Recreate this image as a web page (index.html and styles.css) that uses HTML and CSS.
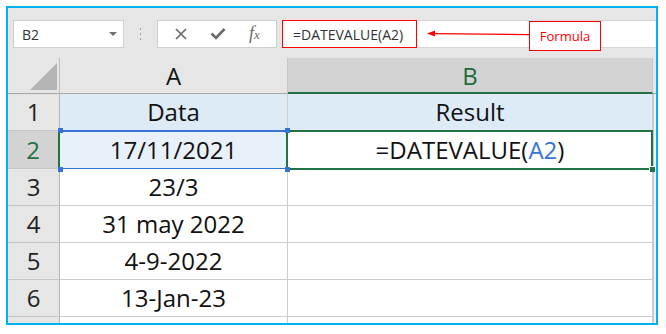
FILE: index.html
```html
<!DOCTYPE html>
<html>
<head>
<meta charset="utf-8">
<link rel="stylesheet" href="styles.css">
</head>
<body>
<div class="frame">
  <div class="toolbar">
    <div class="namebox"><span class="nb-text">B2</span><span class="caret"></span></div>
    <div class="sep"><i></i><i></i><i></i></div>
    <div class="buttons">
      <svg class="ic" width="14" height="14" viewBox="0 0 14 14"><path d="M2 2 L12 12 M12 2 L2 12" stroke="#6b6b6b" stroke-width="1.7" fill="none"/></svg>
      <svg class="ic" width="16" height="14" viewBox="0 0 16 14"><path d="M1.5 6.5 L6 11 L14.5 2" stroke="#6b6b6b" stroke-width="2.6" fill="none"/></svg>
      <span class="fx"><span class="fx-f">f</span><span class="fx-x">x</span></span>
    </div>
    <div class="formula"><span class="ftext">=DATEVALUE(A2)</span></div>
    <svg class="arrow" width="648" height="50" viewBox="0 0 648 50"><path d="M426 25.6 L521 26.6" stroke="#ff0000" stroke-width="1.2" fill="none"/><path d="M419 25.5 L427 22.5 L427 28.5 Z" fill="#ff0000"/></svg>
    <div class="label">Formula</div>
  </div>
  <div class="grid">
    <div class="corner"><span class="tri"></span></div>
    <div class="ch">A</div>
    <div class="ch ch-sel">B</div>
    <div class="fill-h"></div>

    <div class="rh">1</div>
    <div class="c blue">Data</div>
    <div class="c blue">Result</div>
    <div class="fill"></div>

    <div class="rh rh-sel">2</div>
    <div class="c ref">17/11/2021<span class="hd tl"></span><span class="hd tr"></span><span class="hd bl"></span><span class="hd br"></span></div>
    <div class="c active">=DATEVALUE(<span class="refc">A2</span>)<span class="handle"></span></div>
    <div class="fill"></div>

    <div class="rh">3</div>
    <div class="c">23/3</div>
    <div class="c"></div>
    <div class="fill"></div>

    <div class="rh">4</div>
    <div class="c">31 may 2022</div>
    <div class="c"></div>
    <div class="fill"></div>

    <div class="rh">5</div>
    <div class="c">4-9-2022</div>
    <div class="c"></div>
    <div class="fill"></div>

    <div class="rh">6</div>
    <div class="c">13-Jan-23</div>
    <div class="c"></div>
    <div class="fill"></div>

    <div class="rh last"></div>
    <div class="c last"></div>
    <div class="c last"></div>
    <div class="fill"></div>
  </div>
</div>
</body>
</html>
```
FILE: styles.css
```css
* { box-sizing: border-box; }
html, body { margin: 0; padding: 0; background: #ffffff; }
body { font-family: "Open Sans", "Liberation Sans", sans-serif; }

.frame {
  margin: 6px 0 0 6px;
  width: 652px;
  height: 319px;
  border: 2px solid #00b0f0;
  background: #e6e6e6;
  display: flex;
  flex-direction: column;
}

.toolbar {
  position: relative;
  display: flex;
  align-items: stretch;
  height: 50px;
  padding: 12px 0 10px 5px;
}

.namebox {
  width: 111px;
  height: 28px;
  background: #fff;
  border: 1px solid #cfcfcf;
  display: flex;
  align-items: center;
  justify-content: space-between;
  padding: 0 6px 0 8px;
}
.nb-text { font-size: 14px; color: #333; }
.caret {
  width: 0; height: 0;
  border-left: 4px solid transparent;
  border-right: 4px solid transparent;
  border-top: 4px solid #707070;
}

.sep {
  width: 33px;
  display: flex;
  flex-direction: column;
  align-items: center;
  justify-content: center;
  gap: 3px;
}
.sep i { display: block; width: 1px; height: 2px; background: #a6a6a6; }

.buttons {
  width: 120px;
  height: 28px;
  background: #fff;
  border: 1px solid #cfcfcf;
  display: flex;
  align-items: center;
  padding: 0 0 0 16px;
  gap: 22px;
}
.fx {
  font-family: "Liberation Serif", serif;
  font-style: italic;
  color: #6b6b6b;
  font-size: 18px;
  line-height: 1;
  margin-left: 1px;
  margin-top: -2px;
}
.fx-x { font-size: 13px; }

.formula {
  flex: 1;
  margin-left: 5px;
  height: 28px;
  background: #fff;
  border-top: 1px solid #d6d6d6;
  border-bottom: 1px solid #d6d6d6;
  display: flex;
}
.ftext {
  width: 135px;
  height: 28px;
  margin-top: -1px;
  border: 1px solid #ff0000;
  font-size: 14px;
  color: #333;
  padding-left: 10px;
  display: flex;
  align-items: center;
}

.arrow { position: absolute; left: 0; top: 0; }
.label {
  position: absolute;
  left: 521px;
  top: 13px;
  width: 72px;
  height: 30px;
  background: #fff;
  border: 1px solid #ff0000;
  color: #ff0000;
  font-size: 13px;
  display: flex;
  align-items: center;
  justify-content: center;
}

.grid {
  flex: 1;
  display: grid;
  grid-template-columns: 52px 228px 365px 1fr;
  grid-template-rows: 36px 37px 38px 37px 37px 37px 37px 1fr;
  font-size: 24px;
  line-height: 1;
  color: #111;
}
.grid > div {
  display: flex;
  align-items: center;
  justify-content: center;
}

.corner {
  position: relative;
  border-right: 1px solid #bdbdbd;
  border-bottom: 1px solid #a8a8a8;
}
.tri {
  position: absolute;
  right: 2px;
  bottom: 3px;
  width: 0; height: 0;
  border-left: 27px solid transparent;
  border-bottom: 27px solid #b4b4b4;
}

.ch {
  border-right: 1px solid #c6c6c6;
  border-bottom: 1px solid #a8a8a8;
  color: #111;
  padding-top: 1px;
}
.ch-sel {
  background: #d3d3d3;
  color: #1e6b3c;
  border-bottom: 2px solid #217346;
}
.fill-h { border-bottom: 1px solid #a8a8a8; }

.rh {
  background: #e6e6e6;
  border-right: 1px solid #b5b5b5;
  border-bottom: 1px solid #c6c6c6;
  color: #222;
}
.rh-sel {
  background: #d3d3d3;
  color: #217346;
  border-right: 2px solid #217346;
}
.rh.last { border-bottom: none; }

.c {
  position: relative;
  background: #fff;
  border-right: 1px solid #cdcdcd;
  border-bottom: 1px solid #cdcdcd;
}
.c.last { border-bottom: none; }
.c.blue { background: #ddebf7; }
.c.ref { background: #e8f0fa; }
.fill { background: #f3f3f3; border-left: 1px solid #c6c6c6; }

.c.ref::after {
  content: "";
  position: absolute;
  left: -1px; top: -1px; right: 0; bottom: -2px;
  border-top: 2px solid #3573d5;
  border-bottom: 2px solid #3573d5;
}
.hd {
  position: absolute;
  width: 5px; height: 5px;
  background: #3573d5;
  z-index: 3;
}
.hd.tl { left: -2px; top: -3px; }
.hd.tr { right: -3px; top: -3px; }
.hd.bl { left: -2px; bottom: -4px; }
.hd.br { right: -3px; bottom: -4px; }

.c.active::after {
  content: "";
  position: absolute;
  left: -2px; top: -1px; right: -1px; bottom: -2px;
  border: 2px solid #217346;
  z-index: 2;
}
.refc { color: #3573d5; }
.handle {
  position: absolute;
  right: -3px;
  bottom: -4px;
  width: 6px; height: 6px;
  background: #217346;
  border: 1px solid #fff;
  border-right: none;
  border-bottom: none;
  z-index: 3;
}
```
